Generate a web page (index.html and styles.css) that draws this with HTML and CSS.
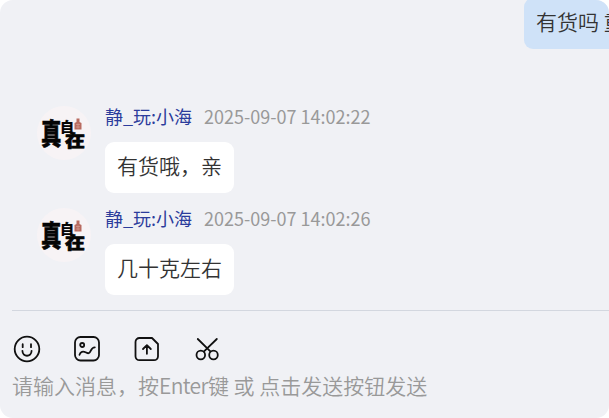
FILE: index.html
```
<!DOCTYPE html>
<html lang="zh-CN">
<head>
    <meta charset="utf-8">
    <title>聊天</title>
    <link rel="stylesheet" href="styles.css">
</head>
<body>
    <main class="chat">
        <section class="messages">
            <div class="message-own">
                <p class="bubble bubble-own">有货吗 重</p>
            </div>
            <article class="message">
                <div class="avatar">
                    <span class="avatar-zhen">真</span>
                    <span class="avatar-zi">自</span>
                    <span class="avatar-zai">在</span>
                    <svg class="seal" viewBox="0 0 8 12"><path d="M.5 5 2.5 4V.5H5.5V4l2 1v6.5H.5z"/><path class="seal-mark" d="M2 6.5h4M2 9h4M4 5.5v5"/></svg>
                </div>
                <div class="content">
                    <header><span class="name">静_玩:小海</span><time>2025-09-07 14:02:22</time></header>
                    <p class="bubble">有货哦，亲</p>
                </div>
            </article>
            <article class="message">
                <div class="avatar">
                    <span class="avatar-zhen">真</span>
                    <span class="avatar-zi">自</span>
                    <span class="avatar-zai">在</span>
                    <svg class="seal" viewBox="0 0 8 12"><path d="M.5 5 2.5 4V.5H5.5V4l2 1v6.5H.5z"/><path class="seal-mark" d="M2 6.5h4M2 9h4M4 5.5v5"/></svg>
                </div>
                <div class="content">
                    <header><span class="name">静_玩:小海</span><time>2025-09-07 14:02:26</time></header>
                    <p class="bubble">几十克左右</p>
                </div>
            </article>
        </section>
        <section class="editor">
            <div class="toolbar">
                <svg viewBox="0 0 30 30">
                    <circle cx="15" cy="15" r="12.3"/>
                    <path d="M10.7 10.2v3M19 10.2v3M10.4 16.8c.2 6.6 9 6.6 9.2 0"/>
                </svg>
                <svg viewBox="0 0 30 30">
                    <rect x="3" y="3" width="24" height="23.5" rx="5.5"/>
                    <circle cx="10.2" cy="11" r="2"/>
                    <path d="M7.5 20.8c1-3 3.5-4 6-2.5 4 2.4 4.5-.4 5.5-2 1-2.2 2-3 3.8-3"/>
                </svg>
                <svg viewBox="0 0 30 30">
                    <path d="M7.5 4H20l6 6v12.2a4 4 0 0 1-4 4H7.5a4 4 0 0 1-4-4V8a4 4 0 0 1 4-4z"/>
                    <path d="M14.9 19.8v-8M11 15l3.9-3.8 3.9 3.8"/>
                </svg>
                <svg viewBox="0 0 30 30">
                    <circle cx="8.8" cy="21" r="4.3"/>
                    <circle cx="21.5" cy="21" r="4.3"/>
                    <path d="M5.8 5l12.8 12.6M24.8 5 11.8 17.6"/>
                </svg>
            </div>
            <div class="placeholder">请输入消息，按<span class="key">Enter</span>键 或 点击发送按钮发送</div>
        </section>
    </main>
</body>
</html>
```
FILE: styles.css
```
body {
    margin: 0;
    background: #fff;
    font-family: "Noto Sans CJK SC", sans-serif;
}

.chat {
    height: 418px;
    overflow: hidden;
    border-radius: 13px;
    background: #f0f1f5;
}

.messages {
    height: 310px;
    overflow: hidden;
}

.message-own {
    display: flex;
    margin: -2px 0 57px 524px;
}

.bubble {
    box-sizing: border-box;
    width: max-content;
    height: 51px;
    margin: 0;
    padding: 0 12px;
    border-radius: 9px;
    background: #fff;
    color: #333;
    font-size: 21px;
    font-weight: 350;
    line-height: 47px;
    white-space: nowrap;
}

.bubble-own {
    flex: none;
    background: #cfe2f8;
}

.message {
    display: flex;
    height: 102px;
    padding-left: 37px;
}

.avatar {
    position: relative;
    flex: none;
    width: 54px;
    height: 54px;
    margin-right: 14px;
    border-radius: 50%;
    background: #f7f3f5;
    color: #050505;
    font-weight: 900;
    line-height: 1;
}

.avatar span {
    position: absolute;
    transform-origin: 0 0;
}

.avatar .avatar-zhen {
    left: 4px;
    top: 11px;
    font-size: 22px;
    transform: scale(0.93, 1.32);
    -webkit-text-stroke: 0.4px #050505;
}

.avatar .avatar-zi {
    left: 23px;
    top: 13px;
    font-size: 14px;
    -webkit-text-stroke: 0.2px #050505;
}

.avatar .avatar-zai {
    left: 28px;
    top: 26px;
    font-size: 20px;
    transform: scaleY(0.85);
    -webkit-text-stroke: 0.8px #050505;
}

.seal {
    position: absolute;
    left: 37px;
    top: 12px;
    width: 8px;
    height: 12px;
    fill: #b96b60;
}

.seal-mark {
    fill: none;
    stroke: #d9a69f;
    stroke-width: 0.6;
}

.content header {
    display: flex;
    gap: 12px;
    height: 36px;
    font-size: 18px;
    line-height: 21px;
}

.name {
    color: #2b3c9c;
}

time {
    color: #999;
}

.editor {
    height: 107px;
    margin-left: 12px;
    border-top: 1px solid #d3d7df;
}

.toolbar {
    display: flex;
    gap: 30px;
    padding-top: 23px;
}

.toolbar svg {
    width: 30px;
    height: 30px;
    fill: none;
    stroke: #111;
    stroke-width: 1.8;
    stroke-linecap: round;
    stroke-linejoin: round;
}

.placeholder {
    margin-top: 5px;
    color: #999;
    font-size: 21px;
    font-weight: 350;
    line-height: 32px;
    white-space: nowrap;
}

.key {
    letter-spacing: -0.6px;
}
```
